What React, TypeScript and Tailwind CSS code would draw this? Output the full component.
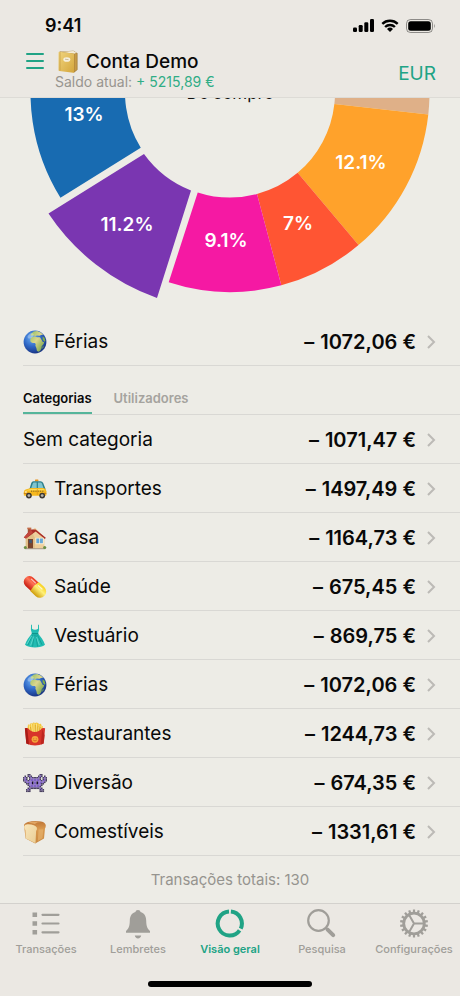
import type { ReactNode } from "react";

const PALETTE = { teal: "#20a385", gray: "#a09e99" };

function Globe() {
  return (
    <svg viewBox="0 0 24 24" className="size-6" aria-hidden="true">
      <defs>
        <radialGradient id="sea" cx="0.38" cy="0.32" r="0.75">
          <stop offset="0" stopColor="#6fb0f4" />
          <stop offset="0.5" stopColor="#2f68c6" />
          <stop offset="1" stopColor="#152c7a" />
        </radialGradient>
        <linearGradient id="land" x1="0" y1="0" x2="1" y2="1">
          <stop offset="0" stopColor="#8fbf62" />
          <stop offset="0.45" stopColor="#dcd68e" />
          <stop offset="1" stopColor="#5f9a3c" />
        </linearGradient>
      </defs>
      <circle cx="12" cy="12" r="11.4" fill="url(#sea)" />
      <path
        d="M8.6 3.2l2.2-1.6 3.4-.6 3.6 1.5 2.5 2.2-2.2.2-1.6.9-2.5-.3-1.6.5-2.2-.6-1.8.3-.9-.8zM8.4 7.2l3.5-.9 2.1.9 3 .1 1.5 2.4 1.3 2.2 1.4.2-.6 1.8-1.9 2.3-.2 2.3-1.5 2.5-1.7.8-1.4-1.1-.5-2.8-1-2.2.3-1.8-.9-1-2.2.2-1.9-1-.6-2.3z"
        fill="url(#land)"
      />
      <path d="M19.5 6.6l2 1.1.9 3.3-1.2.8-1.5-2.3zM19.6 16.6l.9-1.2-.2 2.3-1 1z" fill="#7fae4b" />
      <ellipse cx="7.6" cy="5.8" rx="3.4" ry="2" fill="#fff" opacity=".3" transform="rotate(-38 7.6 5.8)" />
    </svg>
  );
}

function Taxi() {
  return (
    <svg viewBox="0 0 24 24" className="size-6" aria-hidden="true">
      <rect x="12" y="2.6" width="3.4" height="1.8" rx=".5" fill="#e8921b" />
      <path d="M6.300 12.600l1.900-6.400q.5-1.800 2.300-1.900h7q1.800 0 2.700 1.700l2.500 6.600z" fill="#2b7f8c" />
      <path d="M8.200 11.200l1.600-4.700q.3-.9 1.200-.9h2.700v5.600zM14.900 5.600h2.500q1 0 1.500 1l1.700 4.600h-5.700z" fill="#7fc4ce" />
      <path d="M.8 15q0-1.8 1.800-2.5l5.200-1.400h12.900q2.400.6 2.700 3.200v3.500q0 .9-1 .9H1.700q-.9 0-.9-.9z" fill="#f6b91f" />
      <path d="M2.200 13.400l5.600-1.400h12.800l1.400 1.200z" fill="#ffdc59" />
      <path d="M8 14.200h13" stroke="#5c4a20" strokeWidth=".8" strokeDasharray="1 .8" />
      <path d="M.8 16.300h4.500M21 16.300h2.400" stroke="#c97812" strokeWidth="1" />
      <path d="M14.300 12v6" stroke="#d68c10" strokeWidth=".6" />
      <ellipse cx="2.900" cy="15" rx="1.100" ry=".8" fill="#fff3c4" />
      <circle cx="5.900" cy="18.600" r="2.900" fill="#3a3632" />
      <circle cx="5.900" cy="18.600" r="1.400" fill="#b9b5ab" />
      <circle cx="19.200" cy="18.600" r="2.900" fill="#3a3632" />
      <circle cx="19.200" cy="18.600" r="1.400" fill="#b9b5ab" />
    </svg>
  );
}

function House() {
  return (
    <svg viewBox="0 0 24 24" className="size-6" aria-hidden="true">
      <path d="M4.8 2.2h3v6h-3z" fill="#a45335" />
      <path d="M4.3 1.6h4v1.6h-4z" fill="#c66d48" />
      <path d="M2.7 11l5.4-6.2L12 1.8l9.4 9.4V22.5H2.7z" fill="#eecf9c" />
      <path d="M2.7 11.2L8.2 5l3.6 6.5V22.5H2.7z" fill="#d9b47c" opacity=".6" />
      <path d="M7.8 3.4h4.8l10.2 8.3-.9 1.3L12.7 5.6 3 12.4l-2.200-.8z" fill="#a92d28" />
      <path d="M7.8 3.4L.8 11.6l2.200.8 6.800-6z" fill="#c2473d" />
      <path d="M5 13h5v9.500H5z" fill="#7b452c" />
      <path d="M6.100 14h2.800v3.100H6.100z" fill="#45556c" />
      <path d="M12.500 11.800h8.200v6.400h-8.200z" fill="#fff1d3" />
      <path d="M13.300 12.600h3v4.700h-3zM17 12.600h2.900v4.700H17z" fill="#67a9d9" />
      <path d="M2 22.300h20.200v.9H2z" fill="#9c8d7b" />
      <circle cx="2.300" cy="21.500" r="1.500" fill="#6a8f45" />
      <circle cx="21.700" cy="21.500" r="1.600" fill="#6a8f45" />
    </svg>
  );
}

function Pill() {
  return (
    <svg viewBox="0 0 24 24" className="size-6" aria-hidden="true">
      <defs>
        <linearGradient id="pillRed" x1="0" y1="0" x2="0" y2="1">
          <stop offset="0" stopColor="#e8361f" />
          <stop offset=".4" stopColor="#ff7457" />
          <stop offset="1" stopColor="#c51b10" />
        </linearGradient>
        <linearGradient id="pillYellow" x1="0" y1="0" x2="0" y2="1">
          <stop offset="0" stopColor="#f8d11f" />
          <stop offset=".4" stopColor="#fff17a" />
          <stop offset="1" stopColor="#cf9c0a" />
        </linearGradient>
      </defs>
      <g transform="rotate(43 12 12)">
        <path d="M13 6.300H4.400a5.700 5.700 0 0 0 0 11.400H13z" fill="url(#pillRed)" />
        <path d="M11.300 5.800h7.500a6.200 6.200 0 0 1 0 12.400h-7.500q-1.600-6.200 0-12.400z" fill="url(#pillYellow)" />
        <path d="M4 8.700h5.500" stroke="#fff" strokeWidth="1.200" strokeLinecap="round" opacity=".65" />
        <path d="M13.500 8.700h5" stroke="#fff" strokeWidth="1.200" strokeLinecap="round" opacity=".7" />
      </g>
    </svg>
  );
}

function Dress() {
  return (
    <svg viewBox="0 0 24 24" className="size-6" aria-hidden="true">
      <path
        d="M9 .7v4.1c1.4 1.2 4.6 1.2 6 0V.7h.9l.2 5.1-1 3.7c2.4 3.2 5.5 6.600 6.900 11.300-2 1.700-6 2.800-10 2.800s-8-1.100-10-2.800C3.400 16.100 6.500 12.700 8.900 9.500l-1-3.700L8.100.7z"
        fill="#22bcb2"
      />
      <path d="M8.900 9.200h6.200l.3 1H8.600z" fill="#098980" />
      <path
        d="M9.500 11L5 21M11.300 11L9.500 22.600M12.800 11l1.800 11.600M14.500 11L19 20.800"
        stroke="#0d958c"
        strokeWidth=".7"
        fill="none"
      />
      <path d="M8.600 12L4 20M10.700 12.500L7.600 21.500M13.500 13l2.800 8" stroke="#84e8df" strokeWidth=".6" fill="none" />
    </svg>
  );
}

function Fries() {
  return (
    <svg viewBox="0 0 24 24" className="size-6" aria-hidden="true">
      <path
        d="M4.200 9L5 2.600l2 .2.500-1.600 2 .2.700-1 2.200.5.700-.5 2 .6.900 1 2-.2.5 2 1.300.5L19.500 10l-7.300 3.500z"
        fill="#f4c63d"
      />
      <path
        d="M6.200 3.200l1 7M8.500 2l.8 8M11 1.400l.2 9M13.500 1.700l-.6 9M16 2.600l-1.400 8M18.300 4l-1.600 6"
        stroke="#fbe58b"
        strokeWidth="1"
        fill="none"
      />
      <path d="M7.500 5l.7 5M12.300 3v7M15.300 3.600l-1 7M17.500 5l-1.500 5" stroke="#c98d17" strokeWidth=".5" fill="none" />
      <path
        d="M1.900 6.300q1.800-.7 3.100 0 2.800 3.600 7 3.600t7-3.600q1.400-.7 3.100 0L20.700 21.500Q16.500 23.600 12 23.600t-8.700-2.100z"
        fill="#d8342a"
      />
      <path d="M1.900 6.300q1.300-.6 2.300-.2L6 22.600l-2.700-1.100z" fill="#a71c18" />
      <path d="M19.200 7.200L17.800 22.700l2.900-1.200 1-8z" fill="#b2211b" opacity=".7" />
      <circle cx="12" cy="17.300" r="3.400" fill="#f5a73b" />
      <path d="M10.200 18q1.800 2 3.600 0M10.700 16.300v.6M13.300 16.300v.6" stroke="#c5491e" strokeWidth=".7" fill="none" />
    </svg>
  );
}

const INVADER = [
  "...bb......bb...",
  ".b.bpb....bpb.b.",
  "bpb.bpbbbbpb.bpb",
  "bpb.bppppppb.bpb",
  "bppbppppppppbppb",
  ".bppppkppkppppb.",
  "..bbppkppkppbb..",
  "...bppppppppb...",
  "....bppppppb....",
  "...bpbbbbbbpb...",
  "..bpb......bpb..",
  "..bbb......bbb..",
];

function Invader() {
  const fills: Record<string, string> = { b: "#4c4262", p: "#8063c4", k: "#16121f" };
  return (
    <svg viewBox="0 0 32 28" className="size-6" aria-hidden="true">
      {INVADER.flatMap((line, y) =>
        [...line].map((cell, x) =>
          fills[cell] ? (
            <rect key={`${x}-${y}`} x={x * 2} y={y * 2 + 2} width="2.1" height="2.1" fill={fills[cell]} />
          ) : null,
        ),
      )}
    </svg>
  );
}

function Bread() {
  return (
    <svg viewBox="0 0 24 24" className="size-6" aria-hidden="true">
      <defs>
        <linearGradient id="crumb" x1="0" y1="0" x2="1" y2="1">
          <stop offset="0" stopColor="#f9e6ba" />
          <stop offset="1" stopColor="#e9cd95" />
        </linearGradient>
        <linearGradient id="crust" x1="0" y1="0" x2="0" y2="1">
          <stop offset="0" stopColor="#bd7436" />
          <stop offset=".35" stopColor="#d9994f" />
          <stop offset="1" stopColor="#c98840" />
        </linearGradient>
      </defs>
      <path d="M1 5.500Q1.200 3.200 5 2.100 11 .3 18 1.400q4.600.8 4.800 4.200 0 2-.8 2.800L21 18.500l-8.800 5L2.600 18.500z" fill="url(#crust)" />
      <path d="M1.200 6.200Q1.800 4.200 5 4.300q7.200.4 8.800 3.300.7 1.800-.7 3.500l-.6 12.200-9.700-4.700-.4-8.500Q.8 8.500 1.200 6.200z" fill="url(#crumb)" />
      <path d="M5 2.800q7-2 13-.9-4.500.2-6 2Q9 3.100 5 2.800z" fill="#e2a765" />
      <path d="M15.500 9.500l-.7 11.500 4.700-2.800.8-9z" fill="#e9b873" opacity=".6" />
    </svg>
  );
}

function Ledger() {
  return (
    <svg viewBox="0 0 22 24" className="h-6 w-[22px]" aria-hidden="true">
      <defs>
        <linearGradient id="cover" x1="0" y1="0" x2="1" y2="1">
          <stop offset="0" stopColor="#f0d47e" />
          <stop offset="1" stopColor="#d4a63c" />
        </linearGradient>
      </defs>
      <path d="M2.500 1.600L16.500.8l4 2.500v16.500l-3.600 3z" fill="#9d742b" />
      <path d="M2.800 1.800L16.500 1l3.300 2-2.500.8z" fill="#f4ecd8" />
      <path d="M1.500 2.400q0-.7.800-.7l14 1.700q.8.1.8.900V22q0 .9-.9.8L2.300 20.900q-.8-.1-.8-1z" fill="url(#cover)" />
      <path d="M17.400 4l2.400-.7v16l-2.400 2.800z" fill="#c69a48" />
      <path d="M3 2.200v18.500" stroke="#c39a3e" strokeWidth=".7" />
      <ellipse cx="9.800" cy="9.500" rx="3.500" ry="2.300" fill="#f6f0df" />
      <path d="M8 9.200l3.600.5" stroke="#b7a57d" strokeWidth=".7" />
    </svg>
  );
}

function polar(angle: number, radius: number) {
  const a = (angle * Math.PI) / 180;
  return `${(230 + radius * Math.cos(a)).toFixed(2)} ${(92.5 + radius * Math.sin(a)).toFixed(2)}`;
}

function slicePath(from: number, to: number) {
  return `M${polar(from, 199.5)}A199.5 199.5 0 0 1 ${polar(to, 199.5)}L${polar(to, 105)}A105 105 0 0 0 ${polar(from, 105)}Z`;
}

const SLICES = [
  { from: -30, to: 6.3, fill: "#dfb088" },
  { from: 6.3, to: 49.9, fill: "#ffa22b", label: "12.1%", x: 361, y: 169 },
  { from: 49.9, to: 75.1, fill: "#ff5533", label: "7%", x: 298, y: 230 },
  { from: 75.1, to: 107.9, fill: "#f519a3", label: "9.1%", x: 226, y: 247 },
  { from: 148.2, to: 195, fill: "#186bb1", label: "13%", x: 84, y: 121 },
];

function SpendingChart() {
  return (
    <svg
      viewBox="0 98 460 219"
      className="block w-full overflow-hidden font-['Inter',sans-serif]"
      role="img"
      aria-label="Despesas por categoria"
    >
      {SLICES.map((s) => (
        <path key={s.fill} d={slicePath(s.from, s.to)} fill={s.fill} />
      ))}
      <path d="M144 154L48.500 213.500A218 218 0 0 0 157 298L191 190.500A105.500 105.500 0 0 1 144 154Z" fill="#7a36b1" />
      <g fill="#fff" fontSize="19" fontWeight="600" textAnchor="middle">
        {SLICES.map((s) =>
          s.label ? (
            <text key={s.label} x={s.x} y={s.y}>
              {s.label}
            </text>
          ) : null,
        )}
        <text x="127" y="231">
          11.2%
        </text>
      </g>
      <text x="230" y="99" fontSize="17" textAnchor="middle" fill="#111">
        De sempre
      </text>
    </svg>
  );
}

type Entry = { name: string; amount: string; icon?: ReactNode };

const ENTRIES: Entry[] = [
  { name: "Sem categoria", amount: "1071,47" },
  { name: "Transportes", amount: "1497,49", icon: <Taxi /> },
  { name: "Casa", amount: "1164,73", icon: <House /> },
  { name: "Saúde", amount: "675,45", icon: <Pill /> },
  { name: "Vestuário", amount: "869,75", icon: <Dress /> },
  { name: "Férias", amount: "1072,06", icon: <Globe /> },
  { name: "Restaurantes", amount: "1244,73", icon: <Fries /> },
  { name: "Diversão", amount: "674,35", icon: <Invader /> },
  { name: "Comestíveis", amount: "1331,61", icon: <Bread /> },
];

function EntryRow({ name, amount, icon }: Entry) {
  return (
    <button
      type="button"
      className="flex h-[49px] w-full items-center border-b border-[#d9d8d4] pt-px pr-6 text-left text-[19px] leading-6"
    >
      {icon && <span className="mr-[7px]">{icon}</span>}
      <span className="flex-1">{name}</span>
      <span className="flex gap-[6px] text-xl leading-6 font-semibold">
        <span>–</span>
        <span>{amount} €</span>
      </span>
      <svg viewBox="0 0 10 16" className="ml-[10px] h-4 w-[10px]" aria-hidden="true">
        <path d="M2 2l6 6-6 6" fill="none" stroke="#bcbab6" strokeWidth="2" />
      </svg>
    </button>
  );
}

function StatusBar() {
  return (
    <div className="flex h-[50px] items-center justify-between pt-px pr-6 pl-[45px]">
      <span className="text-lg leading-6 font-semibold">9:41</span>
      <div className="flex items-center gap-[7px]">
        <svg viewBox="0 0 21 13" className="h-[13px] w-[21px]" aria-hidden="true">
          <rect x="0" y="8.500" width="4" height="4.500" rx="1.200" />
          <rect x="5.700" y="6" width="4" height="7" rx="1.200" />
          <rect x="11.300" y="3.200" width="4" height="9.800" rx="1.200" />
          <rect x="17" y="0" width="4" height="13" rx="1.200" />
        </svg>
        <svg viewBox="0 0 18 13" className="h-[13px] w-[18px]" aria-hidden="true">
          <path d="M1.300 4.900a11 11 0 0 1 15.400 0M4.100 8a7 7 0 0 1 9.800 0" fill="none" stroke="#000" strokeWidth="2.400" />
          <path d="M6 10a4.300 4.300 0 0 1 6 0l-3 3z" />
        </svg>
        <svg viewBox="0 0 30 14" className="h-[14px] w-[30px]" aria-hidden="true">
          <rect x=".5" y=".5" width="26" height="13" rx="4" fill="none" stroke="#000" strokeOpacity=".4" />
          <rect x="2.200" y="2.200" width="22.600" height="9.600" rx="2.500" />
          <path d="M28 4.700q1.800 2.300 0 4.600z" fillOpacity=".4" />
        </svg>
      </div>
    </div>
  );
}

const TEETH = Array.from({ length: 18 }, (_, i) => i * 20);

const NAV: { name: string; active?: boolean; icon: ReactNode }[] = [
  {
    name: "Transações",
    icon: (
      <g>
        <path d="M1.500 3.500h4.600v4.600H1.500zM1.500 12.200h4.600v4.600H1.500zM1.500 21h4.600v4.600H1.500z" fill="currentColor" />
        <path d="M11.500 5.800H27.500M11.500 14.500H27.500M11.500 23.300H27.500" stroke="currentColor" strokeWidth="2.200" strokeLinecap="round" />
      </g>
    ),
  },
  {
    name: "Lembretes",
    icon: (
      <g fill="currentColor">
        <path d="M15 1c1.500 0 2.400.8 2.500 2.100 4 1.200 5.500 4.100 5.700 8.300.1 5 .9 8.100 3.800 10.500v1.800H3v-1.800c2.900-2.400 3.700-5.500 3.800-10.500.2-4.200 1.700-7.100 5.700-8.300C12.600 1.800 13.500 1 15 1z" />
        <path d="M11.800 26.500h6.400c-.3 1.800-1.500 2.900-3.200 2.900s-2.900-1.100-3.200-2.900z" />
      </g>
    ),
  },
  {
    name: "Visão geral",
    active: true,
    icon: (
      <g fill="none" stroke="currentColor" strokeWidth="4">
        <path d="M15.900 2.500A12 12 0 0 1 25.700 19.600" />
        <path d="M24.600 21.300A12 12 0 1 1 14 2.500" />
      </g>
    ),
  },
  {
    name: "Pesquisa",
    icon: (
      <g fill="none" stroke="currentColor">
        <circle cx="11.500" cy="11.500" r="10.300" strokeWidth="2.200" />
        <path d="M18.500 18.500l2.500 2.500" strokeWidth="2.200" />
        <path d="M20.600 20.600l5.600 5.600" strokeWidth="4" strokeLinecap="round" />
      </g>
    ),
  },
  {
    name: "Configurações",
    icon: (
      <g fill="none" stroke="currentColor">
        {TEETH.map((angle) => (
          <path key={angle} d="M15 .5v3.500" strokeWidth="2.200" transform={`rotate(${angle} 15 14.500)`} />
        ))}
        <circle cx="15" cy="14.500" r="10.300" strokeWidth="2.800" />
        <path d="M15 14.500h10M15 14.500L10 5.800M15 14.500L10 23.200" strokeWidth="2" />
      </g>
    ),
  },
];

export default function App() {
  return (
    <div className="flex min-h-screen flex-col bg-[#edece6] font-['Inter',sans-serif] text-[#090909]">
      <header className="border-b border-[#dddbd6] bg-[#ebe8e3]">
        <StatusBar />
        <div className="flex h-[47px] items-start pr-6 pl-[26px]">
          <button type="button" aria-label="Menu" className="mt-[3px] text-[#20a385]">
            <svg viewBox="0 0 18 16" className="h-4 w-[18px]" aria-hidden="true">
              <path d="M1 1h16M1 8h16M1 15h16" stroke={PALETTE.teal} strokeWidth="2" strokeLinecap="round" />
            </svg>
          </button>
          <div className="ml-[11px] flex-1">
            <h1 className="flex h-6 items-center gap-[7px] pl-[2px] text-[19px] leading-6 font-medium">
              <Ledger />
              Conta Demo
            </h1>
            <p className="text-sm leading-4 text-[#98958f]">
              Saldo atual: <span className="text-[#30ad86]">+ 5215,89 €</span>
            </p>
          </div>
          <button type="button" className="mt-3 text-[19px] leading-6 text-[#20a385]">
            EUR
          </button>
        </div>
      </header>

      <main className="flex-1">
        <SpendingChart />
        <div className="pl-[23px]">
          <EntryRow name="Férias" amount="1072,06" icon={<Globe />} />
          <div role="tablist" className="flex h-[49px] items-end gap-[22px] border-b border-[#d9d8d4] text-[13px] leading-4">
            <button type="button" role="tab" aria-selected="true" className="border-b-2 border-[#55b59a] pb-[6px] font-semibold">
              Categorias
            </button>
            <button
              type="button"
              role="tab"
              aria-selected="false"
              className="border-b-2 border-transparent pb-[6px] font-semibold text-[#a5a39e]"
            >
              Utilizadores
            </button>
          </div>
          {ENTRIES.map((entry) => (
            <EntryRow key={entry.name} {...entry} />
          ))}
        </div>
        <p className="flex h-[47px] items-center justify-center text-[15px] leading-5 text-[#96948f]">
          Transações totais: 130
        </p>
      </main>

      <footer className="border-t border-[#d3d1cd] bg-[#ebe8e3]">
        <nav className="grid h-[76px] grid-cols-5 pt-[5px]">
          {NAV.map((item) => (
            <button
              key={item.name}
              type="button"
              aria-current={item.active ? "page" : undefined}
              className={
                item.active
                  ? "flex flex-col items-center gap-[2px] text-[11px] leading-4 font-semibold text-[#20a385]"
                  : "flex flex-col items-center gap-[2px] text-[11px] leading-4 font-medium text-[#a09e99]"
              }
            >
              <svg viewBox="0 0 30 30" className="size-[30px]" aria-hidden="true">
                {item.icon}
              </svg>
              {item.name}
            </button>
          ))}
        </nav>
        <div className="mx-auto mt-px mb-[9px] h-[6px] w-[164px] rounded-full bg-black" />
      </footer>
    </div>
  );
}
